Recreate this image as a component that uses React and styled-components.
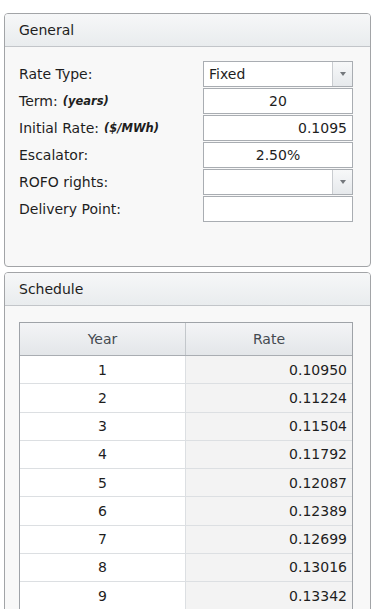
import React from "react";
import styled, { createGlobalStyle } from "styled-components";

const Global = createGlobalStyle`
  html, body { margin: 0; padding: 0; overflow: hidden; background: #ffffff; }
  body { font-family: "DejaVu Sans", Verdana, sans-serif; color: #1e1e1e; }
`;

const Page = styled.div`
  display: flex;
  flex-direction: column;
  gap: 5px;
  padding: 13px 10px 0 4px;
  box-sizing: border-box;
`;

const Panel = styled.section`
  border: 1px solid #a2a4a7;
  border-radius: 4px;
  background: #f8f8f8;
  overflow: hidden;
`;

const PanelHeader = styled.div`
  height: 33px;
  box-sizing: border-box;
  display: flex;
  align-items: center;
  padding-left: 14px;
  font-size: 14px;
  color: #1e1e1e;
  background: linear-gradient(#f6f7f8, #e9ecee);
  border-bottom: 1px solid #c2c5c9;
`;

const FormBody = styled.div`
  height: 219px;
  box-sizing: border-box;
  padding: 14px 17px 0 14px;
  display: grid;
  grid-template-columns: 1fr 150px;
  grid-auto-rows: 26px;
  row-gap: 1px;
  align-content: start;
`;

const Label = styled.div`
  display: flex;
  align-items: center;
  font-size: 14px;
  white-space: nowrap;
  gap: 5px;
`;

const Unit = styled.span`
  font-size: 11.5px;
  font-weight: bold;
  font-style: italic;
`;

const Field = styled.div`
  border: 1px solid #a9adb2;
  background: #ffffff;
  box-sizing: border-box;
  display: flex;
  align-items: center;
  justify-content: ${(p) =>
    p.$align === "right" ? "flex-end" : p.$align === "center" ? "center" : "flex-start"};
  padding: ${(p) => (p.$select ? "0 0 0 5px" : "0 5px")};
  font-size: 14px;
`;

const FieldText = styled.span`
  flex: 1;
  text-align: ${(p) => p.$align || "left"};
`;

const DropButton = styled.div`
  width: 19px;
  align-self: stretch;
  border-left: 1px solid #c9ccd0;
  background: linear-gradient(#f7f8f9, #e6e9ec);
  display: flex;
  align-items: center;
  justify-content: center;
`;

const Caret = styled.div`
  width: 0;
  height: 0;
  border-left: 3.5px solid transparent;
  border-right: 3.5px solid transparent;
  border-top: 4px solid #73777c;
`;

const ScheduleBody = styled.div`
  padding: 16px 17px 15px 14px;
`;

const Table = styled.div`
  border: 1px solid #9fa3a8;
  background: #ffffff;
`;

const Row = styled.div`
  display: grid;
  grid-template-columns: 166px 1fr;
  height: ${(p) => (p.$head ? "33px" : "28.25px")};
  box-sizing: border-box;
  border-bottom: 1px solid ${(p) => (p.$head ? "#a9adb2" : "#dcdfe2")};
  background: ${(p) => (p.$head ? "linear-gradient(#f3f4f6, #e3e6e9)" : "transparent")};
`;

const Cell = styled.div`
  display: flex;
  align-items: center;
  justify-content: ${(p) => (p.$right ? "flex-end" : "center")};
  padding: 0 5px;
  font-size: 14px;
  color: ${(p) => (p.$head ? "#444a50" : "#1e1e1e")};
  background: ${(p) => (p.$shade ? "#f3f3f3" : "transparent")};
  border-right: ${(p) => (p.$divider ? `1px solid ${p.$head ? "#c3c7cb" : "#dcdfe2"}` : "none")};
`;

const rows = Array.from({ length: 9 }, (_, i) => ({
  year: i + 1,
  rate: (0.1095 * Math.pow(1.025, i)).toFixed(5),
}));

export default function App() {
  return (
    <>
      <Global />
      <Page>
        <Panel>
          <PanelHeader>General</PanelHeader>
          <FormBody>
            <Label>Rate Type:</Label>
            <Field $select>
              <FieldText>Fixed</FieldText>
              <DropButton><Caret /></DropButton>
            </Field>

            <Label>Term: <Unit>(years)</Unit></Label>
            <Field $align="center">20</Field>

            <Label>Initial Rate: <Unit>($/MWh)</Unit></Label>
            <Field $align="right">0.1095</Field>

            <Label>Escalator:</Label>
            <Field $align="center">2.50%</Field>

            <Label>ROFO rights:</Label>
            <Field $select>
              <FieldText />
              <DropButton><Caret /></DropButton>
            </Field>

            <Label>Delivery Point:</Label>
            <Field />
          </FormBody>
        </Panel>

        <Panel>
          <PanelHeader>Schedule</PanelHeader>
          <ScheduleBody>
            <Table>
              <Row $head>
                <Cell $head $divider>Year</Cell>
                <Cell $head>Rate</Cell>
              </Row>
              {rows.map((r) => (
                <Row key={r.year}>
                  <Cell $divider>{r.year}</Cell>
                  <Cell $right $shade>{r.rate}</Cell>
                </Row>
              ))}
            </Table>
          </ScheduleBody>
        </Panel>
      </Page>
    </>
  );
}
